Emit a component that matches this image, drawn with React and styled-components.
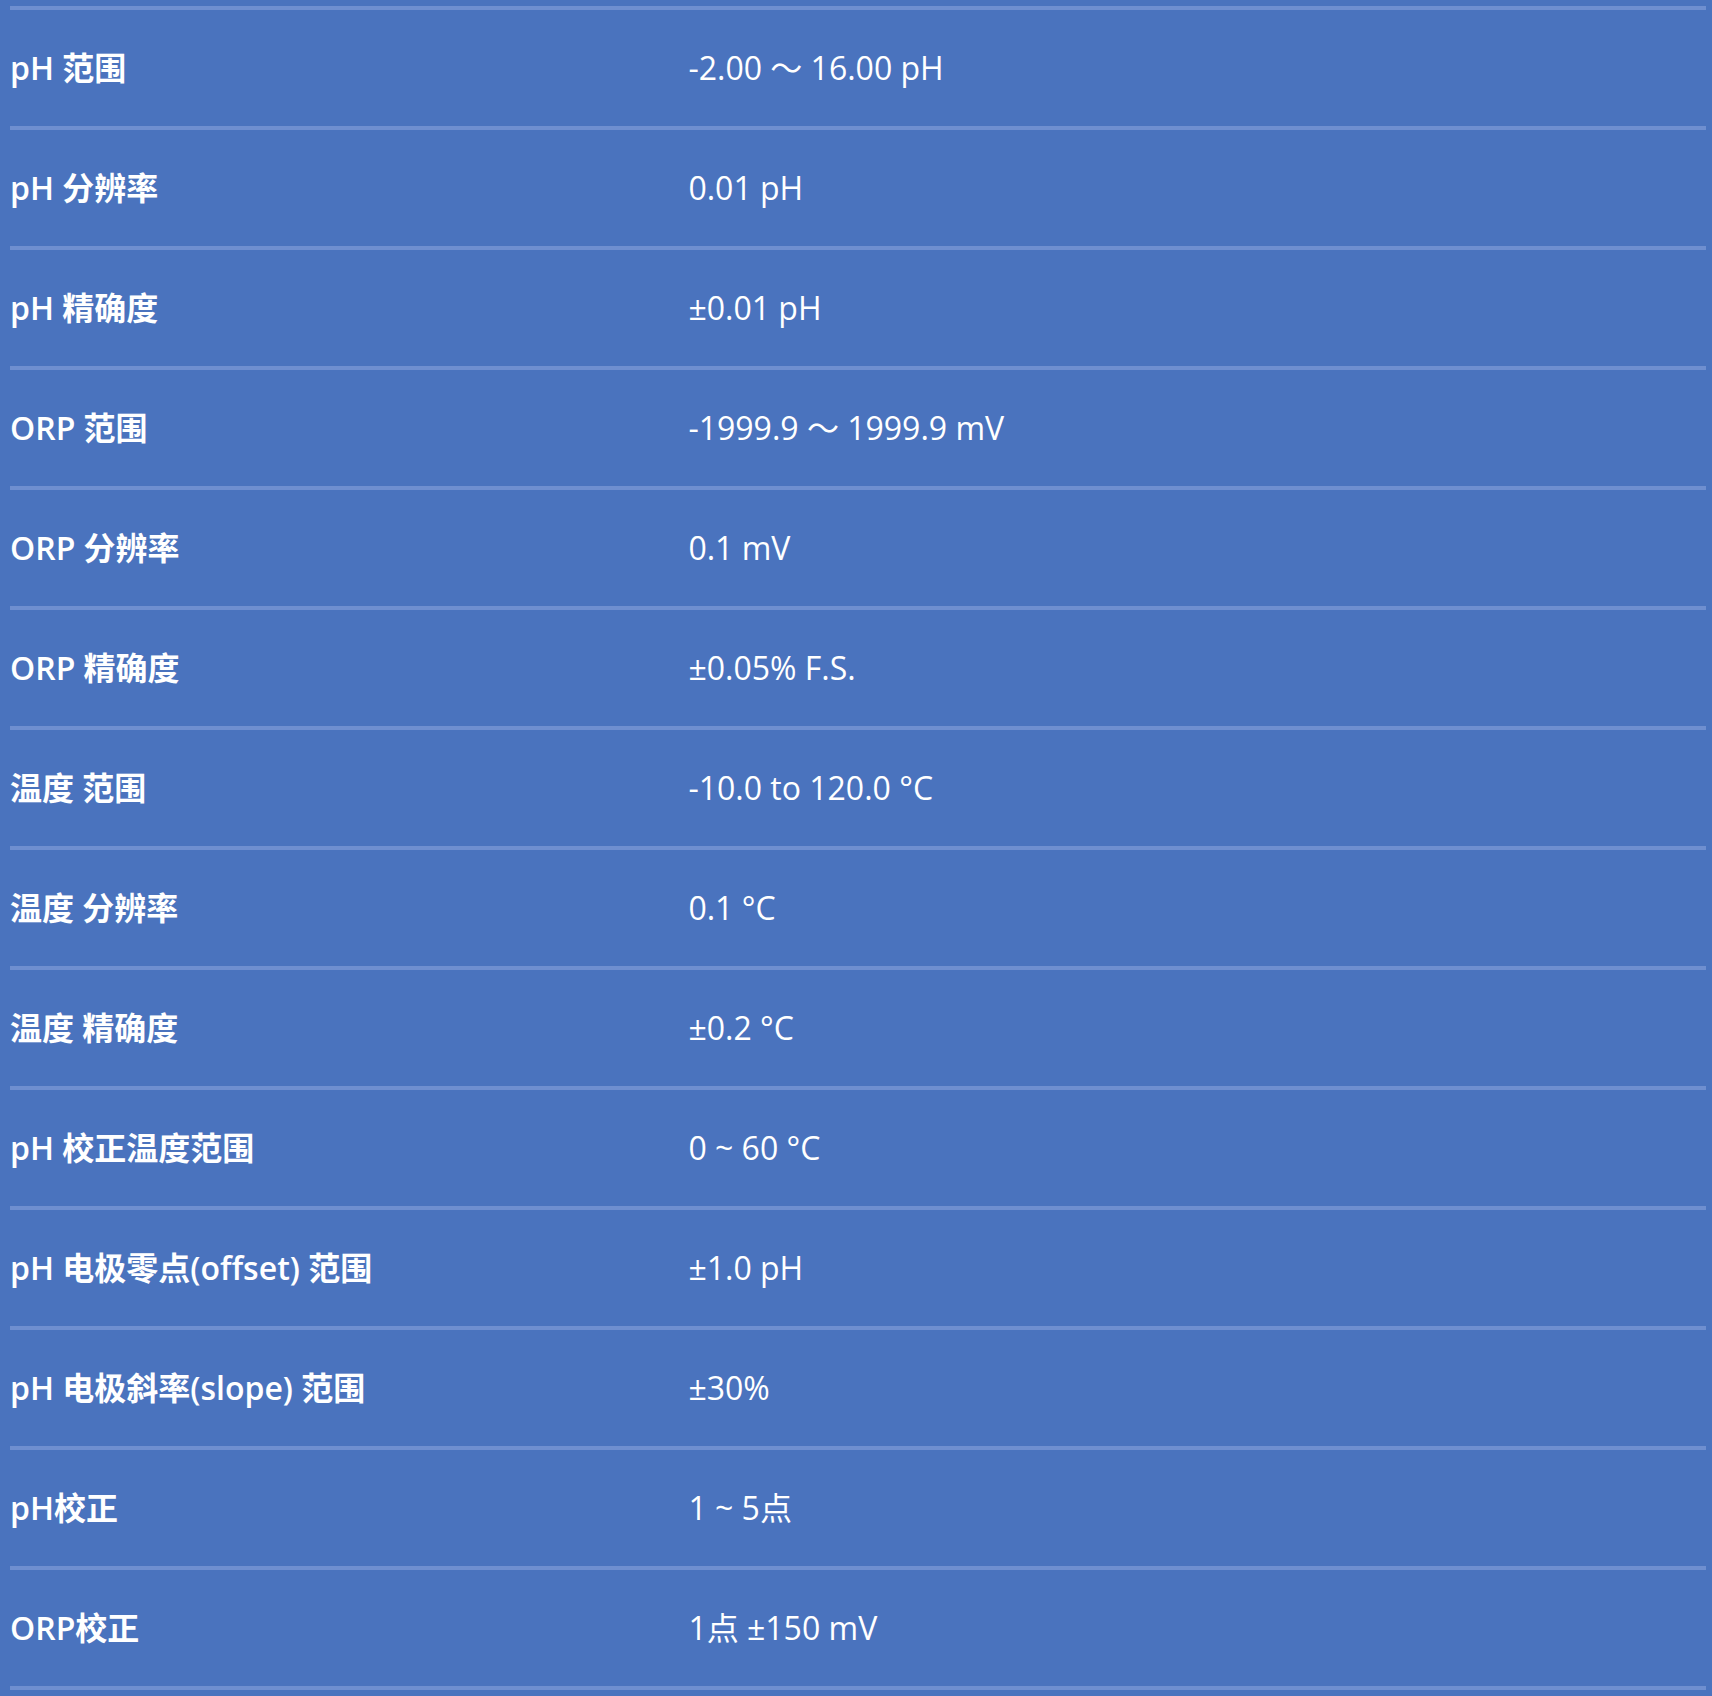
import React from "react";
import styled, { createGlobalStyle } from "styled-components";

const specs = [
  ["pH 范围", "-2.00 ～ 16.00 pH"],
  ["pH 分辨率", "0.01 pH"],
  ["pH 精确度", "±0.01 pH"],
  ["ORP 范围", "-1999.9 ～ 1999.9 mV"],
  ["ORP 分辨率", "0.1 mV"],
  ["ORP 精确度", "±0.05% F.S."],
  ["温度 范围", "-10.0 to 120.0 °C"],
  ["温度 分辨率", "0.1 °C"],
  ["温度 精确度", "±0.2 °C"],
  ["pH 校正温度范围", "0 ~ 60 °C"],
  ["pH 电极零点(offset) 范围", "±1.0 pH"],
  ["pH 电极斜率(slope) 范围", "±30%"],
  ["pH校正", "1 ~ 5点"],
  ["ORP校正", "1点 ±150 mV"],
];

const GlobalStyle = createGlobalStyle`
  html, body {
    margin: 0;
    padding: 0;
    background: #4a73be;
  }
  body {
    font-family: "Open Sans", "Noto Sans CJK SC", sans-serif;
    color: #ffffff;
  }
`;

const Page = styled.div`
  background: #4a73be;
  padding: 6px 6px 6px 10px;
  min-height: 1696px;
  box-sizing: border-box;
`;

const Table = styled.div`
  display: flex;
  flex-direction: column;
  border-bottom: 4px solid #6f8fd0;
`;

const Row = styled.div`
  display: grid;
  grid-template-columns: 40% 60%;
  align-items: center;
  height: 120px;
  box-sizing: border-box;
  border-top: 4px solid #6f8fd0;
`;

const Label = styled.div`
  font-family: "Open Sans", "Noto Sans CJK SC", sans-serif;
  font-weight: 600;
  font-size: 32px;
  line-height: 1.2;
`;

const Value = styled.div`
  font-family: "Open Sans", "Noto Sans CJK SC", sans-serif;
  font-weight: 400;
  font-size: 32px;
  line-height: 1.2;
`;

export default function App() {
  return (
    <>
      <GlobalStyle />
      <Page>
        <Table>
          {specs.map(([label, value]) => (
            <Row key={label}>
              <Label>{label}</Label>
              <Value>{value}</Value>
            </Row>
          ))}
        </Table>
      </Page>
    </>
  );
}
